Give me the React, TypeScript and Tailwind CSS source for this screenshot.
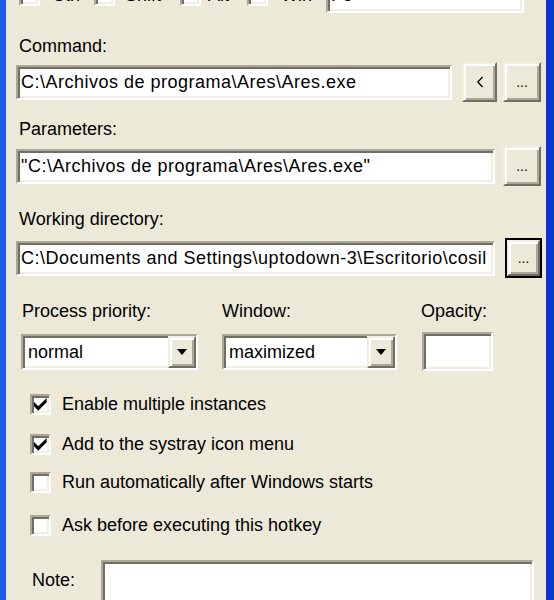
import React from 'react';

const sunken =
  'border-2 border-t-[#aca899] border-l-[#aca899] border-r-white border-b-white shadow-[inset_2px_2px_0_#716f64,inset_-2px_-2px_0_#f1efe2]';
const raised =
  'border-2 border-t-[#f1efe2] border-l-[#f1efe2] border-r-[#716f64] border-b-[#716f64] shadow-[inset_2px_2px_0_#ffffff,inset_-2px_-2px_0_#aca899]';

const CheckBox: React.FC<{ checked?: boolean }> = ({ checked }) => (
  <span className={`w-[21px] h-[21px] shrink-0 bg-white flex items-center justify-center ${sunken}`}>
    {checked && (
      <svg width="13" height="13" viewBox="0 0 7 7">
        <path d="M0 2.2 L2.3 4.4 L6.8 0 L6.8 2.3 L2.3 6.8 L0 4.5 Z" fill="#000" />
      </svg>
    )}
  </span>
);

const TextBox: React.FC<{ value?: string; className?: string }> = ({ value = '', className = '' }) => (
  <div
    className={`bg-white flex items-center pl-[3px] overflow-hidden whitespace-nowrap tracking-[0.5px] ${sunken} ${className}`}
  >
    {value}
  </div>
);

const Btn: React.FC<{ label: string; focused?: boolean }> = ({ label, focused }) =>
  focused ? (
    <div className="w-[37px] h-[40px] border-2 border-black">
      <div className={`w-full h-full bg-[#ece9d8] flex items-center justify-center text-[14px] ${raised}`}>
        {label}
      </div>
    </div>
  ) : (
    <div className={`w-[38px] h-[40px] bg-[#ece9d8] flex items-center justify-center text-[14px] ${raised}`}>
      {label}
    </div>
  );

const Combo: React.FC<{ value: string; className?: string }> = ({ value, className = '' }) => (
  <div className={`h-[36px] bg-white flex items-center ${sunken} ${className}`}>
    <span className="flex-1 pl-[5px]">{value}</span>
    <div className={`w-[28px] h-full bg-[#ece9d8] flex items-center justify-center ${raised}`}>
      <svg width="10" height="6" viewBox="0 0 10 6">
        <path d="M0 0 H10 L5 6 Z" fill="#000" />
      </svg>
    </div>
  </div>
);

const Option: React.FC<{ checked?: boolean; label: string; className?: string }> = ({ checked, label, className = '' }) => (
  <div className={`flex items-center ml-[24px] gap-[11px] h-[22px] ${className}`}>
    <CheckBox checked={checked} />
    <span>{label}</span>
  </div>
);

export default function App() {
  return (
    <div
      className="w-[554px] h-[600px] overflow-hidden flex text-[18px] text-black leading-[22px]"
      style={{ fontFamily: '"Liberation Sans", Arial, sans-serif' }}
    >
      <div className="w-[6px] bg-[#1c5ce6]" />
      <div className="flex-1 bg-[#ece9d8] flex flex-col">
        {/* hotkey modifiers (scrolled, top clipped) */}
        <div className="flex items-center ml-[13px] mt-[-23px] h-[36px]">
          <div className="w-[75px] flex items-center gap-[12px]">
            <CheckBox />
            <span>Ctrl</span>
          </div>
          <div className="w-[86px] flex items-center gap-[10px]">
            <CheckBox />
            <span>Shift</span>
          </div>
          <div className="w-[67px] flex items-center gap-[7px]">
            <CheckBox />
            <span>Alt</span>
          </div>
          <div className="w-[79px] flex items-center gap-[13px]">
            <CheckBox />
            <span>Win</span>
          </div>
          <TextBox value="F6" className="w-[198px] h-[36px]" />
        </div>

        <div className="ml-[13px] mt-[22px]">Command:</div>
        <div className="flex items-center ml-[10px] mt-[5px] h-[40px]">
          <TextBox value="C:\Archivos de programa\Ares\Ares.exe" className="w-[436px] h-[35px]" />
          <div className="ml-[10px] w-[35px] h-[40px]">
            <div className={`w-full h-full bg-[#ece9d8] flex items-center justify-center ${raised}`}>
              <svg width="8" height="12" viewBox="0 0 8 12">
                <path d="M6.5 1 L1.8 6 L6.5 11" stroke="#000" strokeWidth="1.3" fill="none" />
              </svg>
            </div>
          </div>
          <div className="ml-[6px]">
            <Btn label="..." />
          </div>
        </div>

        <div className="ml-[13px] mt-[16px]">Parameters:</div>
        <div className="flex items-center ml-[10px] mt-[6px] h-[40px]">
          <TextBox value={'"C:\\Archivos de programa\\Ares\\Ares.exe"'} className="w-[479px] h-[35px]" />
          <div className="ml-[8px]">
            <Btn label="..." />
          </div>
        </div>

        <div className="ml-[13px] mt-[22px]">Working directory:</div>
        <div className="flex items-center ml-[10px] mt-[8px] h-[40px]">
          <TextBox
            value="C:\Documents and Settings\uptodown-3\Escritorio\cosil"
            className="w-[479px] h-[35px]"
          />
          <div className="ml-[10px]">
            <Btn label="..." focused />
          </div>
        </div>

        <div className="flex ml-[16px] mt-[22px]">
          <span className="w-[200px]">Process priority:</span>
          <span className="w-[199px]">Window:</span>
          <span>Opacity:</span>
        </div>
        <div className="flex items-center ml-[15px] mt-[10px] h-[39px]">
          <Combo value="normal" className="w-[177px]" />
          <Combo value="maximized" className="w-[175px] ml-[24px]" />
          <TextBox className="w-[71px] h-[39px] ml-[25px]" />
        </div>

        <Option checked label="Enable multiple instances" className="mt-[22px]" />
        <Option checked label="Add to the systray icon menu" className="mt-[18px]" />
        <Option label="Run automatically after Windows starts" className="mt-[16px]" />
        <Option label="Ask before executing this hotkey" className="mt-[21px]" />

        <div className="flex ml-[26px] mt-[24px]">
          <span className="w-[69px] mt-[9px]">Note:</span>
          <TextBox className="w-[433px] h-[46px]" />
        </div>
      </div>
      <div className="w-[8px] bg-[#0a36d2]" />
    </div>
  );
}
